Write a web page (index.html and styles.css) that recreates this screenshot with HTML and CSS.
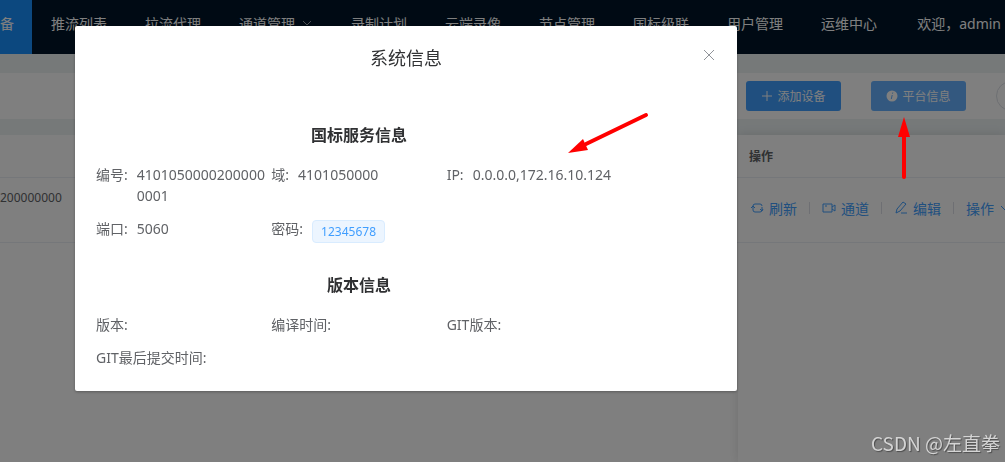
FILE: index.html
```html
<!DOCTYPE html>
<html lang="zh-CN">
  <head>
    <meta charset="utf-8">
    <title>系统信息</title>
    <link rel="stylesheet" href="styles.css">
  </head>
  <body>
    <div class="page">
      <nav class="navbar">
        <a href="#" class="nav-item active">备</a>
        <a href="#" class="nav-item">推流列表</a>
        <a href="#" class="nav-item">拉流代理</a>
        <a href="#" class="nav-item">通道管理
          <svg class="nav-arrow" viewBox="0 0 12 12"><path d="M2 4l4 4 4-4"/></svg>
        </a>
        <a href="#" class="nav-item">录制计划</a>
        <a href="#" class="nav-item">云端录像</a>
        <a href="#" class="nav-item">节点管理</a>
        <a href="#" class="nav-item">国标级联</a>
        <a href="#" class="nav-item">用户管理</a>
        <a href="#" class="nav-item">运维中心</a>
        <a href="#" class="nav-item user">欢迎，admin</a>
      </nav>

      <div class="toolbar">
        <button class="btn btn-add">
          <svg class="btn-icon" viewBox="0 0 12 12"><path d="M6 1v10M1 6h10"/></svg>
          添加设备
        </button>
        <button class="btn btn-info">
          <svg class="btn-icon" viewBox="0 0 12 12">
            <circle class="info-disc" cx="6" cy="6" r="5.5"/>
            <path class="info-mark" d="M6.8 2.5l-.3 1.2M6.2 5l-.9 4"/>
          </svg>
          平台信息
        </button>
        <button class="btn-circle" aria-label="刷新"></button>
      </div>

      <div class="tables">
        <table class="main-table">
          <tr><th></th></tr>
          <tr><td>200000000</td></tr>
        </table>
        <div class="fixed-right">
          <table>
            <tr><th>操作</th></tr>
            <tr>
              <td>
                <div class="actions">
                  <a href="#">
                    <svg viewBox="0 0 14 14"><path d="M3 9V5q0-2 2-2h5q2 0 2 2M1 7l2-2 2 2M12 6v3q0 2-2 2H5q-2 0-2-2M10 8l2 2 1-2"/></svg>
                    刷新
                  </a>
                  <span class="divider"></span>
                  <a href="#">
                    <svg viewBox="0 0 14 14"><path d="M1 3h9v8H1zM10 6l3-2v6l-3-2M3 5h2"/></svg>
                    通道
                  </a>
                  <span class="divider"></span>
                  <a href="#">
                    <svg viewBox="0 0 14 14"><path d="M2 12l1-4 6-7 3 2-6 7zM7 12h6"/></svg>
                    编辑
                  </a>
                  <span class="divider"></span>
                  <a href="#">操作
                    <svg viewBox="0 0 14 14"><path d="M2 5l5 5 5-5"/></svg>
                  </a>
                </div>
              </td>
            </tr>
          </table>
        </div>
      </div>
    </div>

    <div class="mask">
      <div class="dialog" role="dialog" aria-labelledby="dialog-title">
        <div class="dialog-header">
          <h1 id="dialog-title">系统信息</h1>
          <button class="close" aria-label="关闭">
            <svg viewBox="0 0 12 12"><path d="M1 1l10 10M11 1L1 11"/></svg>
          </button>
        </div>
        <div class="dialog-body">
          <h2>国标服务信息</h2>
          <dl>
            <div class="item"><dt>编号:</dt><dd>41010500002000000001</dd></div>
            <div class="item"><dt>域:</dt><dd>4101050000</dd></div>
            <div class="item"><dt>IP:</dt><dd class="nowrap">0.0.0.0,172.16.10.124</dd></div>
            <div class="item"><dt>端口:</dt><dd>5060</dd></div>
            <div class="item"><dt>密码:</dt><dd><span class="tag">12345678</span></dd></div>
          </dl>
          <h2>版本信息</h2>
          <dl>
            <div class="item"><dt>版本:</dt><dd></dd></div>
            <div class="item"><dt>编译时间:</dt><dd></dd></div>
            <div class="item"><dt>GIT版本:</dt><dd></dd></div>
            <div class="item"><dt>GIT最后提交时间:</dt><dd></dd></div>
          </dl>
        </div>
      </div>
    </div>

    <svg class="arrow arrow-ip" viewBox="0 0 84 44">
      <path d="M80 6L20 35" />
      <polygon points="2,44 17,30 22,41" />
    </svg>
    <svg class="arrow arrow-btn" viewBox="0 0 14 64">
      <path d="M7 60V18" />
      <polygon points="7,0 13,20 1,20" />
    </svg>
    <div class="watermark">CSDN @左直拳</div>
  </body>
</html>
```
FILE: styles.css
```css
* {
  box-sizing: border-box;
}

body {
  margin: 0;
  font-family: "Noto Sans", "Noto Sans CJK SC", sans-serif;
  font-size: 14px;
  color: #606266;
  overflow: hidden;
}

a {
  text-decoration: none;
}

svg {
  fill: none;
  stroke: currentColor;
}

.page {
  display: flex;
  flex-direction: column;
  min-height: 100vh;
  background-color: #ecf2f3;
}

/* top menu */
.navbar {
  display: flex;
  height: 54px;
  background-color: #001529;
  overflow: hidden;
}

.nav-item {
  display: flex;
  flex-shrink: 0;
  align-items: center;
  padding: 0 19px;
  padding-bottom: 8px;
  color: #fff;
  white-space: nowrap;
}

.nav-item.active {
  padding-left: 0;
  padding-right: 18px;
  background-color: #1890ff;
}

.nav-item.user {
  margin-left: auto;
  padding-right: 4px;
}

.nav-arrow {
  width: 12px;
  height: 12px;
  margin-left: 6px;
  opacity: 0.6;
}

/* buttons above the list */
.toolbar {
  display: flex;
  justify-content: flex-end;
  gap: 30px;
  margin-top: 19px;
  padding: 8px 0;
  background-color: #fff;
  overflow: hidden;
}

.btn {
  display: flex;
  align-items: center;
  justify-content: center;
  gap: 4px;
  width: 95px;
  height: 30px;
  padding: 0;
  border: none;
  border-radius: 3px;
  font-family: inherit;
  font-size: 12px;
  color: #fff;
}

.btn-add {
  background-color: #409eff;
}

.btn-info {
  background-color: #66b1ff;
}

.btn-icon {
  width: 12px;
  height: 12px;
}

.info-disc {
  fill: #fff;
  stroke: none;
}

.info-mark {
  stroke: #66b1ff;
}

.btn-circle {
  width: 30px;
  height: 30px;
  margin-right: -21px;
  border: 1px solid #dcdfe6;
  border-radius: 50%;
  background-color: #fff;
}

/* device list */
.tables {
  display: flex;
  flex: 1;
  margin-top: 16px;
  background-color: #fff;
}

table {
  width: 100%;
  border-collapse: collapse;
  font-size: 12px;
}

th {
  height: 42px;
  padding: 0 11px;
  border-bottom: 1px solid #ebeef5;
  text-align: left;
  color: #606266;
}

td {
  height: 65px;
  padding: 0 11px 4px;
  border-bottom: 1px solid #ebeef5;
}

.main-table {
  flex: 1;
  align-self: flex-start;
}

.main-table td {
  padding: 8px 0;
  line-height: 23px;
  vertical-align: top;
}

.fixed-right {
  width: 267px;
  box-shadow: 0 0 10px rgba(0, 0, 0, 0.12);
  overflow: hidden;
}

.actions {
  display: flex;
  align-items: center;
  padding-left: 1px;
  font-size: 14px;
}

.actions a {
  display: flex;
  flex-shrink: 0;
  align-items: center;
  gap: 5px;
  color: #409eff;
}

.actions svg {
  width: 14px;
  height: 14px;
}

.divider {
  flex-shrink: 0;
  width: 1px;
  height: 12px;
  margin: 0 12px;
  background-color: #dcdfe6;
}

/* dialog */
.mask {
  position: fixed;
  inset: 0;
  display: flex;
  align-items: flex-start;
  padding: 26px 268px 0 75px;
  background-color: rgba(0, 0, 0, 0.5);
}

.dialog {
  flex: 1;
  border-radius: 2px;
  background-color: #fff;
  box-shadow: 0 1px 3px rgba(0, 0, 0, 0.3);
}

.dialog-header {
  position: relative;
  padding: 20px 20px 10px;
  text-align: center;
}

.dialog-header h1 {
  margin: 0;
  font-size: 18px;
  font-weight: 400;
  line-height: 24px;
  color: #303133;
}

.close {
  position: absolute;
  top: 23px;
  right: 22px;
  width: 12px;
  height: 12px;
  padding: 0;
  border: none;
  background: none;
  color: #909399;
}

.close svg {
  display: block;
}

.dialog-body {
  padding: 43px 115px 11px 21px;
}

h2 {
  margin: 0 0 17px;
  font-size: 16px;
  font-weight: 700;
  line-height: 24px;
  text-align: center;
  color: #303133;
}

dl {
  display: grid;
  grid-template-columns: repeat(3, 1fr);
  margin: 0;
}

dl + h2 {
  margin-top: 18px;
}

.item {
  display: flex;
  gap: 9px;
  padding-bottom: 12px;
  line-height: 21px;
}

dt {
  flex-shrink: 0;
  white-space: nowrap;
}

dd {
  margin: 0;
  word-break: break-all;
}

dd.nowrap {
  white-space: nowrap;
}

.tag {
  display: block;
  height: 23px;
  margin-top: 2px;
  padding: 0 8px;
  border: 1px solid #d9ecff;
  border-radius: 4px;
  background-color: #ecf5ff;
  font-size: 12px;
  color: #409eff;
}

/* red pointers */
.arrow {
  position: fixed;
  stroke: #f00;
  stroke-width: 4;
  stroke-linecap: round;
}

.arrow polygon {
  fill: #f00;
  stroke: none;
}

.arrow-ip {
  top: 109px;
  left: 566px;
  width: 84px;
  height: 44px;
}

.arrow-btn {
  top: 117px;
  right: 94px;
  width: 14px;
  height: 64px;
}

.watermark {
  position: fixed;
  right: 5px;
  bottom: 4px;
  font-family: "Noto Sans CJK SC", sans-serif;
  font-size: 19px;
  line-height: 30px;
  color: #d4d4d4;
  text-shadow: 1px 1px 1px rgba(0, 0, 0, 0.4);
}
```
